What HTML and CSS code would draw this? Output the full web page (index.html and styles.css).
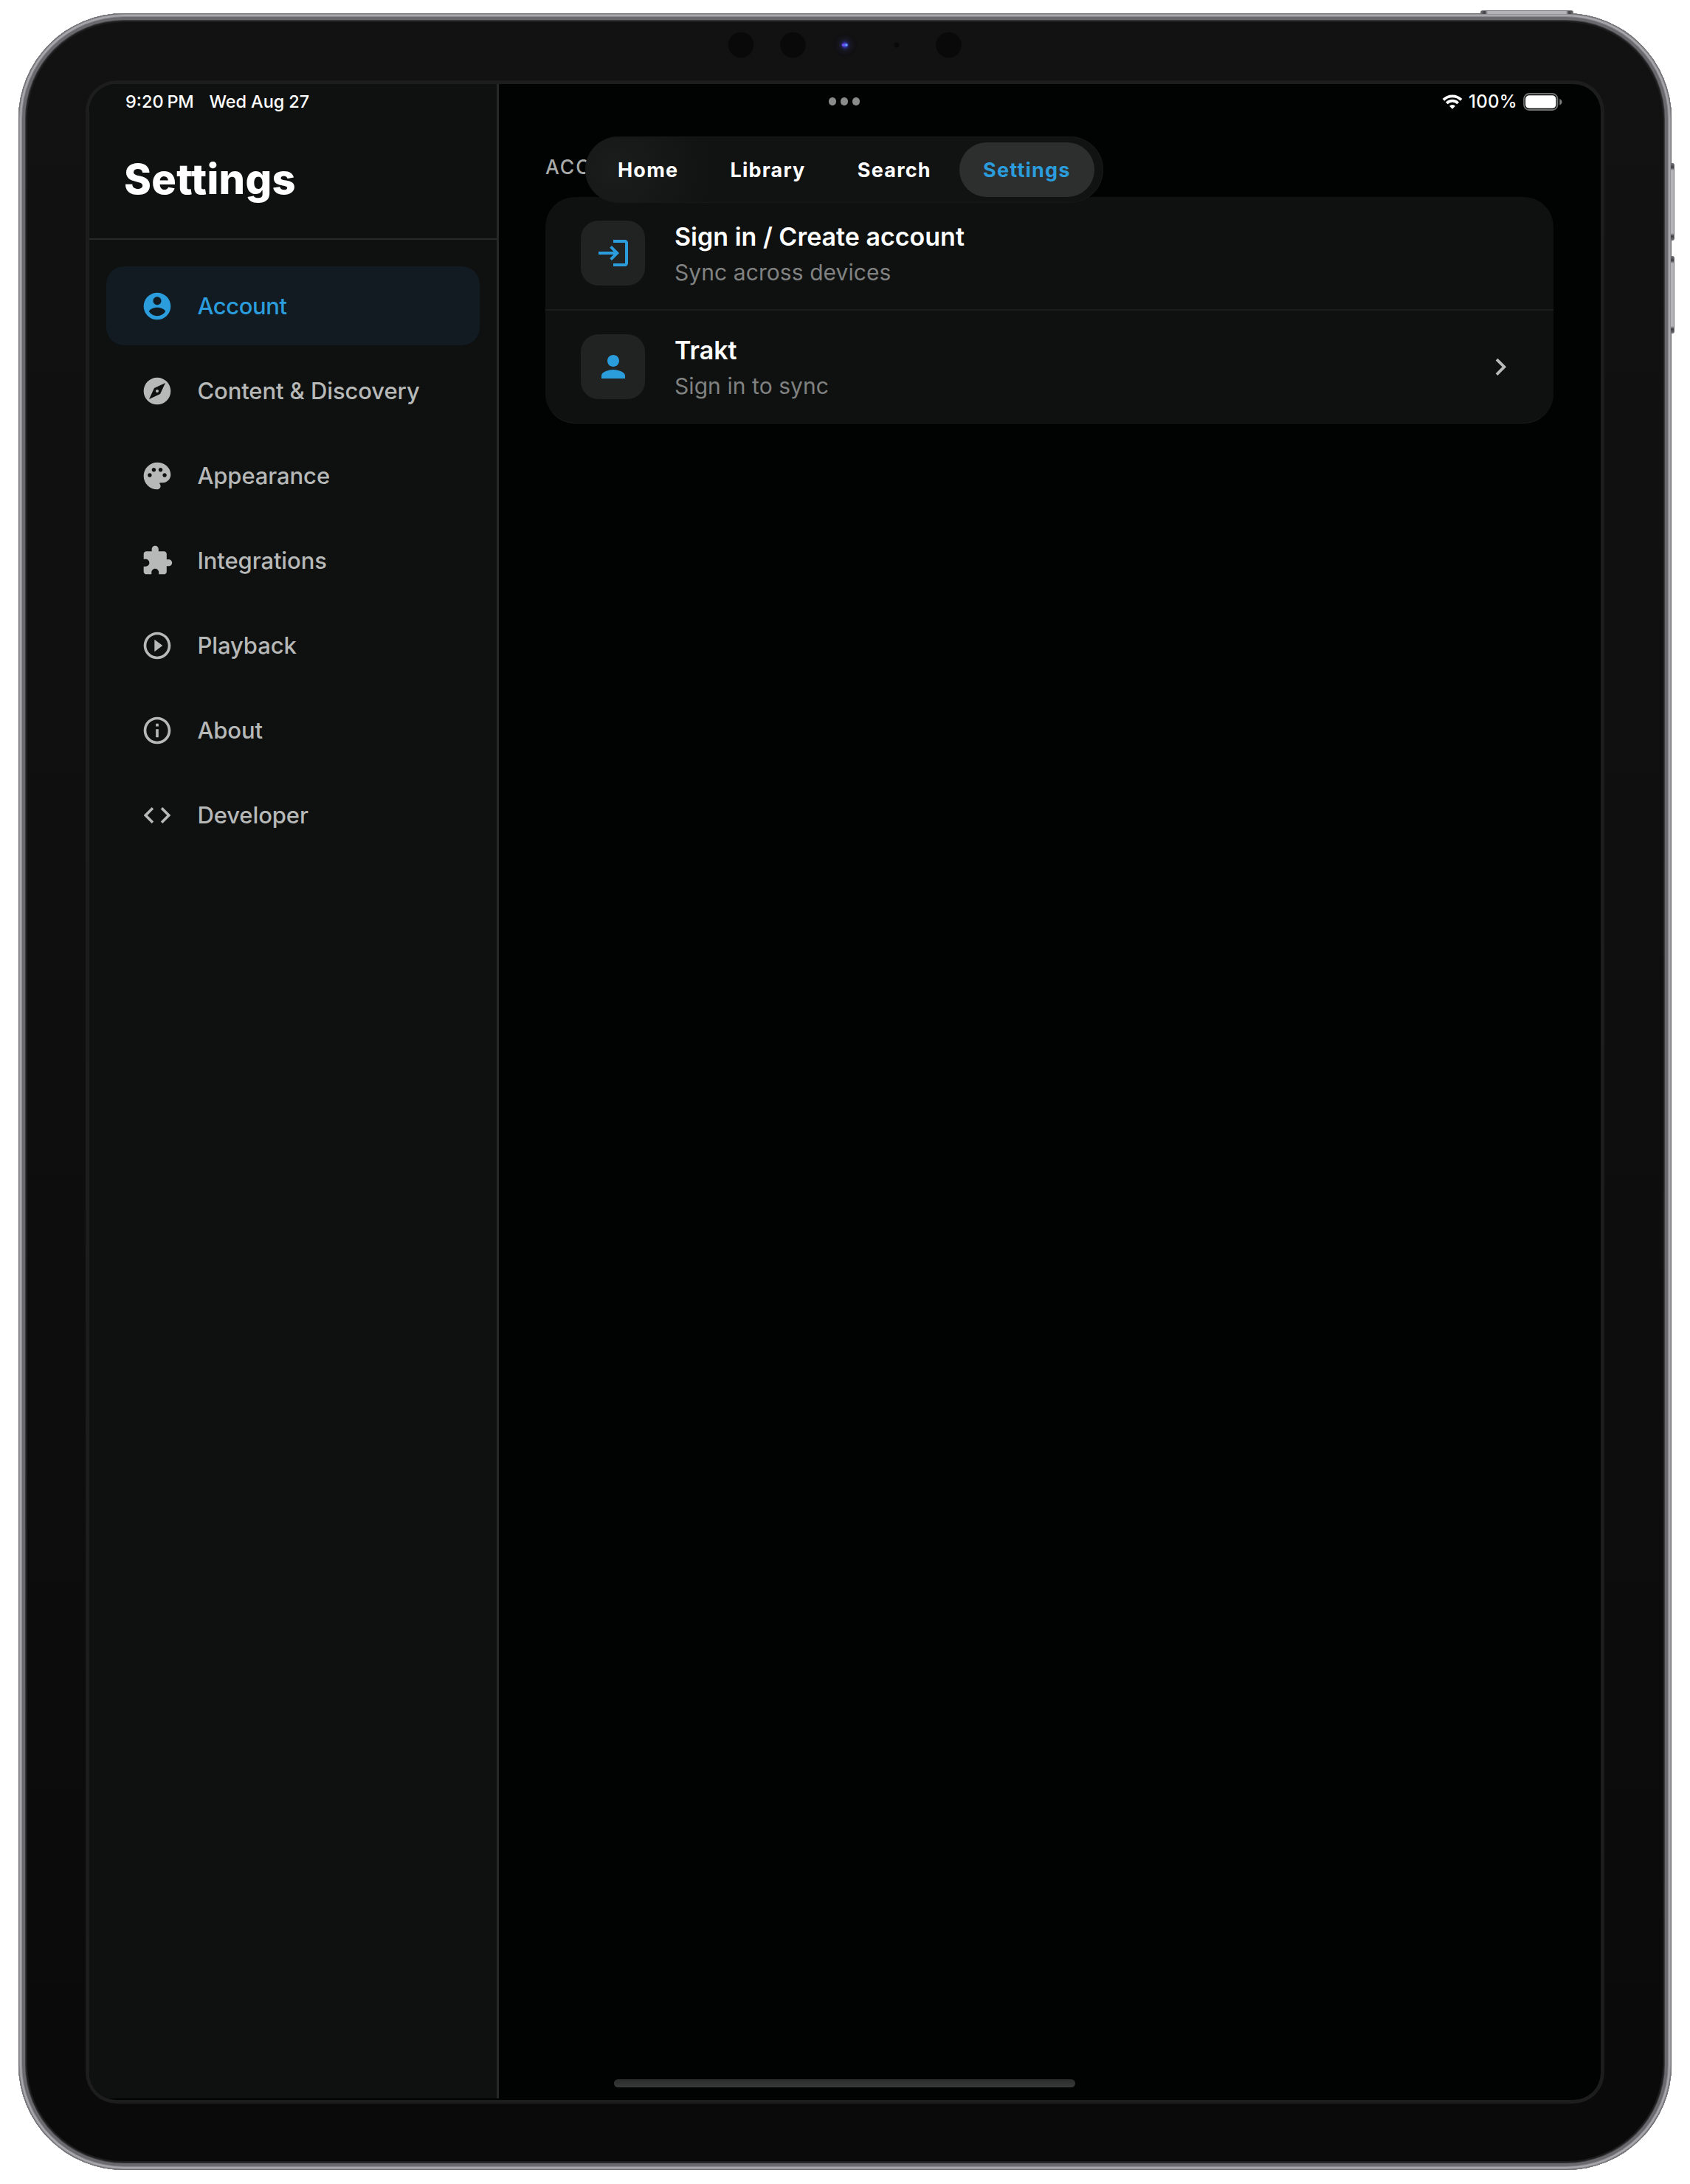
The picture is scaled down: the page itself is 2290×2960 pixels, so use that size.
FILE: index.html
```
<!DOCTYPE html>
<html lang="en">
<head>
<meta charset="utf-8">
<title>Settings</title>
<link rel="stylesheet" href="styles.css">
</head>
<body>
<div class="device">
  <span class="key key-power"></span>
  <span class="key key-volume-up"></span>
  <span class="key key-volume-down"></span>
  <div class="bezel-top">
    <svg class="sensors" viewBox="0 0 330 40" aria-hidden="true">
      <defs>
        <radialGradient id="lens">
          <stop offset="0" stop-color="#6b78ff"/>
          <stop offset=".16" stop-color="#3a35b8"/>
          <stop offset=".32" stop-color="#1c1d42"/>
          <stop offset=".55" stop-color="#15151c"/>
          <stop offset="1" stop-color="#0f0f10"/>
        </radialGradient>
      </defs>
      <g fill="#090909"><circle cx="24" cy="20" r="17.3"/><circle cx="94.5" cy="20" r="17.3"/><circle cx="305.5" cy="20" r="17.3"/></g>
      <circle cx="165" cy="20" r="16" fill="url(#lens)"/>
      <circle cx="162.5" cy="20" r="1.8" fill="#6f4dff"/><circle cx="167" cy="20" r="1.8" fill="#5f9dff"/>
      <circle cx="235" cy="20" r="3.4" fill="#090909"/>
    </svg>
  </div>
  <div class="screen">
    <aside class="sidebar">
      <header class="sidebar-header"><h1 class="title">Settings</h1></header>
      <nav class="menu">
        <a class="menu-item menu-item-active">
          <svg class="menu-icon" viewBox="0 0 24 24"><path d="M12 2C6.48 2 2 6.48 2 12s4.48 10 10 10 10-4.48 10-10S17.52 2 12 2zm0 3c1.66 0 3 1.34 3 3s-1.34 3-3 3-3-1.34-3-3 1.34-3 3-3zm0 14.2c-2.5 0-4.71-1.28-6-3.22.03-1.99 4-3.08 6-3.08 1.99 0 5.97 1.09 6 3.08-1.29 1.94-3.5 3.22-6 3.22z"/></svg>
          <span>Account</span>
        </a>
        <a class="menu-item">
          <svg class="menu-icon" viewBox="0 0 24 24"><path d="M12 10.9c-.61 0-1.1.49-1.1 1.1s.49 1.1 1.1 1.1c.61 0 1.1-.49 1.1-1.1s-.49-1.1-1.1-1.1zM12 2C6.48 2 2 6.48 2 12s4.48 10 10 10 10-4.48 10-10S17.52 2 12 2zm2.19 12.19L6 18l3.81-8.19L18 6l-3.81 8.19z"/></svg>
          <span>Content &amp; Discovery</span>
        </a>
        <a class="menu-item">
          <svg class="menu-icon" viewBox="0 0 24 24"><path d="M12 2C6.49 2 2 6.49 2 12s4.49 10 10 10c1.38 0 2.5-1.12 2.5-2.5 0-.61-.23-1.2-.64-1.67-.08-.1-.13-.21-.13-.33 0-.28.22-.5.5-.5H16c3.31 0 6-2.69 6-6 0-4.96-4.49-9-10-9zm5.5 11c-.83 0-1.5-.67-1.5-1.5s.67-1.5 1.5-1.5 1.5.67 1.5 1.5-.67 1.5-1.5 1.5zm-3-4c-.83 0-1.5-.67-1.5-1.5S13.67 6 14.5 6s1.5.67 1.5 1.5S15.33 9 14.5 9zM5 11.5c0-.83.67-1.5 1.5-1.5s1.5.67 1.5 1.5S7.33 13 6.5 13 5 12.33 5 11.5zm6-4c0 .83-.67 1.5-1.5 1.5S8 8.33 8 7.5 8.67 6 9.5 6s1.5.67 1.5 1.5z"/></svg>
          <span>Appearance</span>
        </a>
        <a class="menu-item">
          <svg class="menu-icon" viewBox="0 0 24 24"><path d="M20.5 11H19V7c0-1.1-.9-2-2-2h-4V3.5C13 2.12 11.88 1 10.5 1S8 2.12 8 3.5V5H4c-1.1 0-1.99.9-1.99 2v3.8H3.5c1.49 0 2.7 1.21 2.7 2.7s-1.21 2.7-2.7 2.7H2V20c0 1.1.9 2 2 2h3.8v-1.5c0-1.49 1.21-2.7 2.7-2.7 1.49 0 2.7 1.21 2.7 2.7V22H17c1.1 0 2-.9 2-2v-4h1.5c1.38 0 2.5-1.12 2.5-2.5S21.88 11 20.5 11z"/></svg>
          <span>Integrations</span>
        </a>
        <a class="menu-item">
          <svg class="menu-icon" viewBox="0 0 24 24"><path d="m10 16.5 6-4.5-6-4.5v9zM12 2C6.48 2 2 6.48 2 12s4.48 10 10 10 10-4.48 10-10S17.52 2 12 2zm0 18c-4.41 0-8-3.59-8-8s3.59-8 8-8 8 3.59 8 8-3.59 8-8 8z"/></svg>
          <span>Playback</span>
        </a>
        <a class="menu-item">
          <svg class="menu-icon" viewBox="0 0 24 24"><path d="M11 7h2v2h-2zm0 4h2v6h-2zm1-9C6.48 2 2 6.48 2 12s4.48 10 10 10 10-4.48 10-10S17.52 2 12 2zm0 18c-4.41 0-8-3.59-8-8s3.59-8 8-8 8 3.59 8 8-3.59 8-8 8z"/></svg>
          <span>About</span>
        </a>
        <a class="menu-item">
          <svg class="menu-icon" viewBox="0 0 24 24"><path d="M9.4 16.6 4.8 12l4.6-4.6L8 6l-6 6 6 6 1.4-1.4zm5.2 0 4.6-4.6-4.6-4.6L16 6l6 6-6 6-1.4-1.4z"/></svg>
          <span>Developer</span>
        </a>
      </nav>
    </aside>
    <main class="content">
      <h2 class="section-label">ACCOUNT</h2>
      <section class="card">
        <div class="row">
          <span class="row-icon"><svg viewBox="0 0 24 24"><path d="M11 7 9.6 8.4l2.6 2.6H2v2h10.2l-2.6 2.6L11 17l5-5-5-5zm9 12h-8v2h8c1.1 0 2-.9 2-2V5c0-1.1-.9-2-2-2h-8v2h8v14z"/></svg></span>
          <div class="row-text">
            <div class="row-title">Sign in / Create account</div>
            <div class="row-sub">Sync across devices</div>
          </div>
        </div>
        <div class="row">
          <span class="row-icon"><svg viewBox="0 0 24 24"><path d="M12 12c2.21 0 4-1.79 4-4s-1.79-4-4-4-4 1.79-4 4 1.79 4 4 4zm0 2c-2.67 0-8 1.34-8 4v2h16v-2c0-2.66-5.33-4-8-4z"/></svg></span>
          <div class="row-text">
            <div class="row-title">Trakt</div>
            <div class="row-sub">Sign in to sync</div>
          </div>
          <svg class="chevron" viewBox="0 0 24 24"><path d="M10 6 8.59 7.41 13.17 12l-4.58 4.59L10 18l6-6z"/></svg>
        </div>
      </section>
    </main>
    <div class="status">
      <div class="status-left"><span class="time">9:20</span><span class="meridiem">PM</span><span class="date">Wed Aug 27</span></div>
      <div class="dots"><i></i><i></i><i></i></div>
      <div class="status-right">
        <svg class="wifi" viewBox="0 0 28 20"><path d="M1.9 7.3a17.1 17.1 0 0 1 24.2 0M6.3 11.9a10.9 10.9 0 0 1 15.4 0" fill="none" stroke="#fff" stroke-width="3.8"/><path d="m14 19.8 4-4.1a5.7 5.7 0 0 0-8 0z" fill="#fff"/></svg>
        <span class="percent">100%</span>
        <svg class="battery" viewBox="0 0 53 24"><rect x="1" y="1" width="45.5" height="22" rx="7" fill="none" stroke="#6f7070" stroke-width="1.8"/><rect x="3" y="3.2" width="41.5" height="17.6" rx="5" fill="#fff"/><path d="M49.3 8v8.4c1.9-.7 3.2-2.3 3.2-4.2s-1.3-3.5-3.2-4.2z" fill="#7c7d7d"/></svg>
      </div>
    </div>
    <nav class="tabs">
      <a class="tab">Home</a><a class="tab">Library</a><a class="tab">Search</a><a class="tab tab-active">Settings</a>
    </nav>
    <div class="home-indicator"></div>
  </div>
</div>
</body>
</html>
```

FILE: styles.css
```
* { box-sizing: border-box; margin: 0; padding: 0; }

body {
  width: 2290px;
  height: 2960px;
  padding: 18px 25px 19px;
  background: #fff;
  font-family: Inter, "Liberation Sans", sans-serif;
  overflow: hidden;
}

svg { display: block; fill: currentColor; }

/* Tablet body */
.device {
  position: relative;
  width: 2240px;
  height: 2923px;
  padding: 0 96px 95px;
  border-radius: 143px;
  background: linear-gradient(#121212, #0a0a0a);
  box-shadow:
    inset 0 0 0 1px #6d6d72,
    inset 0 0 0 2px #919196,
    inset 0 0 0 4px #a8a8ad,
    inset 0 0 0 5px #8a8a8f,
    inset 0 0 0 9px #69696e,
    inset 0 0 0 10px #3d3d40,
    inset 0 0 0 12px #1e1e1f;
}

.key { position: absolute; border-radius: 3px; }
.key-power {
  top: -4px;
  left: 1981px;
  width: 126px;
  height: 5px;
  border-radius: 3px 3px 0 0;
  background: linear-gradient(90deg, #77777c, #3f3f43 6px, #b3b3b8 10px, #b3b3b8 116px, #3f3f43 120px, #77777c);
  border-top: 1px solid #727277;
}
.key-volume-up, .key-volume-down {
  left: 2239px;
  width: 5px;
  height: 105px;
  border-radius: 0 3px 3px 0;
  background: linear-gradient(#77777c, #3f3f43 6px, #b3b3b8 10px, #b3b3b8 95px, #3f3f43 99px, #77777c);
  border-right: 1px solid #727277;
}
.key-volume-up { top: 203px; }
.key-volume-down { top: 329px; }

.bezel-top { height: 96px; padding-top: 23px; }
.sensors { width: 330px; height: 40px; margin: 0 auto; }

/* Display */
.screen {
  position: relative;
  display: flex;
  width: 2048px;
  height: 2732px;
  border-radius: 37px;
  background: #010302;
  box-shadow: 0 0 0 5px #1d1d1d;
  overflow: hidden;
}

.sidebar {
  width: 555px;
  height: 2730px;
  background: #0f1110;
  border-right: 3px solid #262827;
}

.sidebar-header {
  height: 211px;
  padding: 99px 0 0 47px;
  border-bottom: 2px solid #282a29;
}
.title {
  font-size: 56px;
  line-height: 60px;
  font-weight: 800;
  letter-spacing: .3px;
  color: #fff;
}

.menu {
  display: flex;
  flex-direction: column;
  gap: 8.1px;
  padding: 36px 23px 0;
}
.menu-item {
  display: flex;
  align-items: center;
  gap: 32px;
  height: 107px;
  padding-left: 47.4px;
  border-radius: 24px;
  font-size: 31px;
  line-height: 38px;
  font-weight: 500;
  letter-spacing: -.1px;
  color: #b7b9b8;
}
.menu-item-active { background: #111b21; color: #2b9cdc; letter-spacing: -.4px; }
.menu-icon { width: 44px; height: 44px; }

.content { flex: 1; padding: 96px 64.5px 0 63px; }

/* The tab bar floats over the end of this label */
.section-label {
  margin-bottom: 25px;
  font-size: 26.5px;
  line-height: 32px;
  font-weight: 550;
  letter-spacing: 2px;
  color: #a9abaa;
}

.card {
  border-radius: 40px;
  background: #0f1110;
  border-bottom: 1.5px solid #1b1d1c;
  overflow: hidden;
}
.row {
  display: flex;
  align-items: center;
  height: 152px;
  padding: 0 48px;
}
.row + .row { height: 154px; border-top: 2px solid #1b1d1c; }
.row-icon {
  display: grid;
  place-items: center;
  width: 87px;
  height: 88px;
  border-radius: 24px;
  background: #212322;
  color: #2b9cdc;
}
.row-icon svg { width: 48px; height: 48px; }
.row-text { flex: 1; margin-left: 40px; }
.row-title {
  font-size: 34px;
  line-height: 46px;
  font-weight: 600;
  color: #fff;
}
.row-sub {
  margin-top: 6px;
  font-size: 30px;
  line-height: 38px;
  letter-spacing: .07px;
  color: #808281;
}
.chevron { width: 46.6px; height: 46.6px; color: #b9bbba; }

/* Overlays on top of the app */
.status {
  position: absolute;
  top: 0;
  left: 0;
  right: 0;
  display: grid;
  grid-template-columns: 1fr auto 1fr;
  align-items: center;
  height: 47px;
  padding: 0 52px 0 49px;
  font-size: 23.5px;
  line-height: 30px;
  font-weight: 500;
  color: #fff;
}
.status-left, .status-right { display: flex; align-items: center; }
.status-right { justify-content: flex-end; }
.meridiem { margin-left: 5px; letter-spacing: -.3px; }
.date { margin-left: 21px; letter-spacing: -.1px; }
.dots { display: flex; gap: 5.6px; padding-left: 1px; }
.dots i { width: 10.4px; height: 10.4px; border-radius: 50%; background: #8a8b8b; }
.wifi { width: 28px; height: 20px; }
.percent { margin: 0 8px 0 8px; font-size: 24px; letter-spacing: .3px; }
.battery { width: 53px; height: 24px; }

.tabs {
  position: absolute;
  top: 71px;
  left: 672px;
  display: flex;
  align-items: center;
  gap: 6.3px;
  width: 702px;
  height: 90px;
  padding-left: 12px;
  border-radius: 45px;
  background: radial-gradient(circle at 40px 45px, #1b1c1c, #111312 130px);
  box-shadow: inset 0 0 0 1px #171918;
}
.tab {
  height: 74px;
  padding: 0 32px;
  border-radius: 37px;
  font-size: 27px;
  line-height: 75px;
  font-weight: 650;
  letter-spacing: 1.2px;
  color: #fff;
}
.tab-active { background: #2d2f2e; color: #2b9cdc; }

.home-indicator {
  position: absolute;
  left: 711px;
  bottom: 17px;
  width: 625px;
  height: 11px;
  border-radius: 6px;
  background: linear-gradient(#2a2c2b, #393b3a);
}
```
